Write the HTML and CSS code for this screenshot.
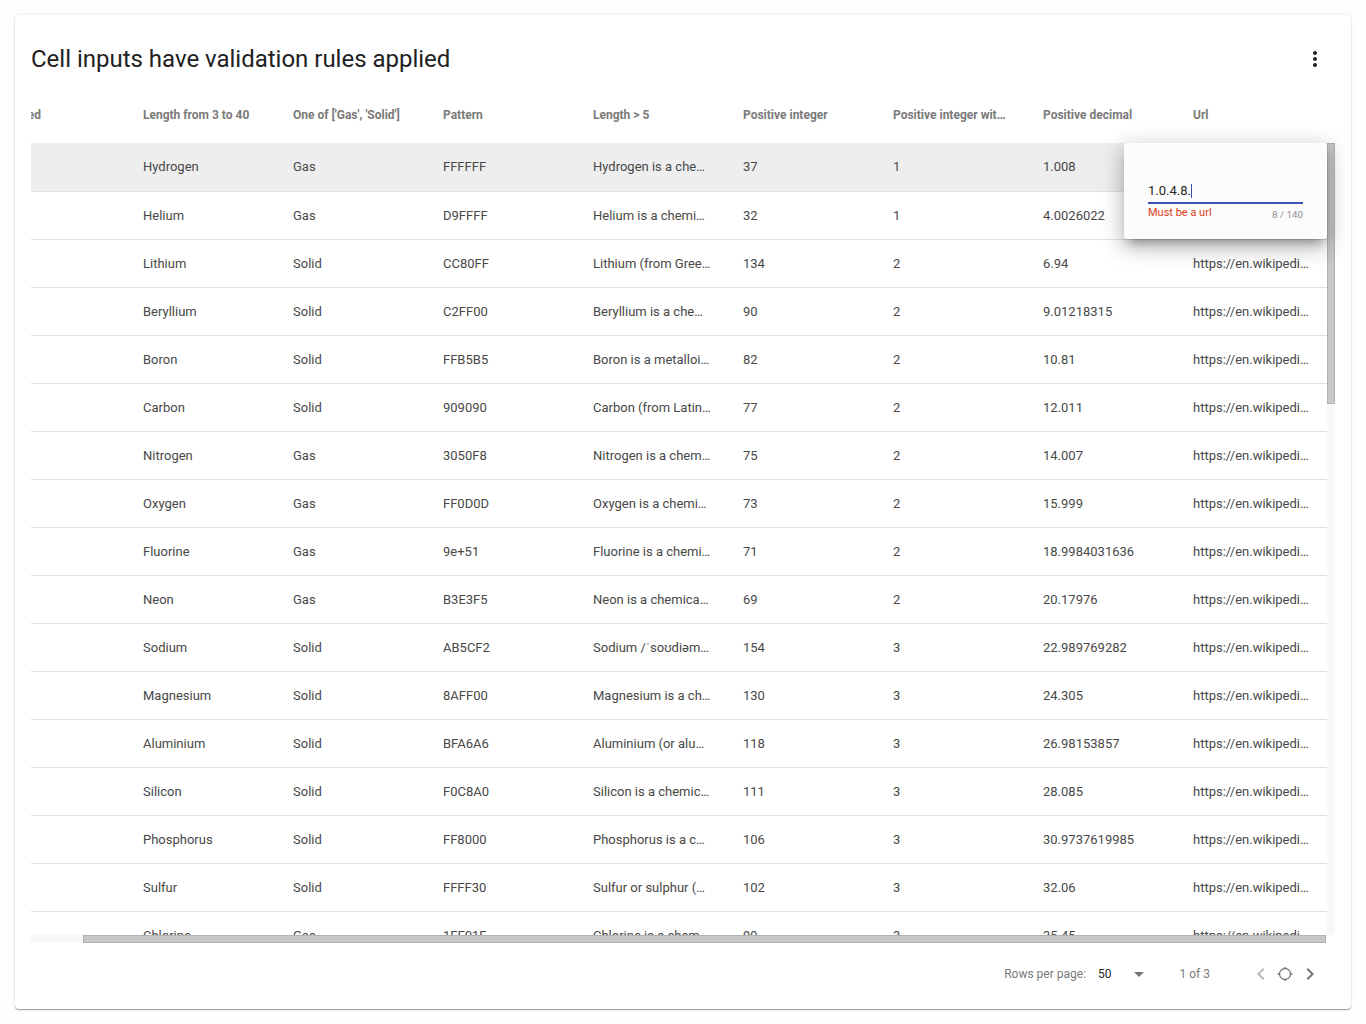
FILE: index.html
```html
<!DOCTYPE html>
<html lang="en">
<head>
<meta charset="utf-8">
<title>Cell inputs have validation rules applied</title>
<link rel="stylesheet" href="styles.css">
</head>
<body>
<main class="card">
  <header class="card-header">
    <h1 class="title">Cell inputs have validation rules applied</h1>
    <svg class="menu" width="24" height="24" viewBox="0 0 24 24"><path d="M12 8c1.1 0 2-.9 2-2s-.9-2-2-2-2 .9-2 2 .9 2 2 2zm0 2c-1.1 0-2 .9-2 2s.9 2 2 2 2-.9 2-2-.9-2-2-2zm0 6c-1.1 0-2 .9-2 2s.9 2 2 2 2-.9 2-2-.9-2-2-2z"/></svg>
  </header>
  <div class="head row">
    <span class="clipped"><span>ed</span></span><span>Length from 3 to 40</span><span>One of ['Gas', 'Solid']</span><span>Pattern</span><span>Length &gt; 5</span><span>Positive integer</span><span>Positive integer wit…</span><span>Positive decimal</span><span>Url</span>
  </div>
  <section class="viewport">
    <div class="rows">
      <div class="row active"><span></span><span>Hydrogen</span><span>Gas</span><span>FFFFFF</span><span>Hydrogen is a che…</span><span>37</span><span>1</span><span>1.008</span><span></span></div>
      <div class="row"><span></span><span>Helium</span><span>Gas</span><span>D9FFFF</span><span>Helium is a chemi…</span><span>32</span><span>1</span><span>4.0026022</span><span></span></div>
      <div class="row"><span></span><span>Lithium</span><span>Solid</span><span>CC80FF</span><span>Lithium (from Gree…</span><span>134</span><span>2</span><span>6.94</span><span>https://en.wikipedi…</span></div>
      <div class="row"><span></span><span>Beryllium</span><span>Solid</span><span>C2FF00</span><span>Beryllium is a che…</span><span>90</span><span>2</span><span>9.01218315</span><span>https://en.wikipedi…</span></div>
      <div class="row"><span></span><span>Boron</span><span>Solid</span><span>FFB5B5</span><span>Boron is a metalloi…</span><span>82</span><span>2</span><span>10.81</span><span>https://en.wikipedi…</span></div>
      <div class="row"><span></span><span>Carbon</span><span>Solid</span><span>909090</span><span>Carbon (from Latin…</span><span>77</span><span>2</span><span>12.011</span><span>https://en.wikipedi…</span></div>
      <div class="row"><span></span><span>Nitrogen</span><span>Gas</span><span>3050F8</span><span>Nitrogen is a chem…</span><span>75</span><span>2</span><span>14.007</span><span>https://en.wikipedi…</span></div>
      <div class="row"><span></span><span>Oxygen</span><span>Gas</span><span>FF0D0D</span><span>Oxygen is a chemi…</span><span>73</span><span>2</span><span>15.999</span><span>https://en.wikipedi…</span></div>
      <div class="row"><span></span><span>Fluorine</span><span>Gas</span><span>9e+51</span><span>Fluorine is a chemi…</span><span>71</span><span>2</span><span>18.9984031636</span><span>https://en.wikipedi…</span></div>
      <div class="row"><span></span><span>Neon</span><span>Gas</span><span>B3E3F5</span><span>Neon is a chemica…</span><span>69</span><span>2</span><span>20.17976</span><span>https://en.wikipedi…</span></div>
      <div class="row"><span></span><span>Sodium</span><span>Solid</span><span>AB5CF2</span><span>Sodium /ˈsoʊdiəm…</span><span>154</span><span>3</span><span>22.989769282</span><span>https://en.wikipedi…</span></div>
      <div class="row"><span></span><span>Magnesium</span><span>Solid</span><span>8AFF00</span><span>Magnesium is a ch…</span><span>130</span><span>3</span><span>24.305</span><span>https://en.wikipedi…</span></div>
      <div class="row"><span></span><span>Aluminium</span><span>Solid</span><span>BFA6A6</span><span>Aluminium (or alu…</span><span>118</span><span>3</span><span>26.98153857</span><span>https://en.wikipedi…</span></div>
      <div class="row"><span></span><span>Silicon</span><span>Solid</span><span>F0C8A0</span><span>Silicon is a chemic…</span><span>111</span><span>3</span><span>28.085</span><span>https://en.wikipedi…</span></div>
      <div class="row"><span></span><span>Phosphorus</span><span>Solid</span><span>FF8000</span><span>Phosphorus is a c…</span><span>106</span><span>3</span><span>30.9737619985</span><span>https://en.wikipedi…</span></div>
      <div class="row"><span></span><span>Sulfur</span><span>Solid</span><span>FFFF30</span><span>Sulfur or sulphur (…</span><span>102</span><span>3</span><span>32.06</span><span>https://en.wikipedi…</span></div>
      <div class="row"><span></span><span>Chlorine</span><span>Gas</span><span>1FF01F</span><span>Chlorine is a chem…</span><span>99</span><span>3</span><span>35.45</span><span>https://en.wikipedi…</span></div>
    </div>
    <div class="track-y"><div class="thumb-y"></div></div>
    <div class="track-x"><div class="thumb-x"></div></div>
    <div class="editor">
      <div class="field"><span>1.0.4.8.</span><i class="caret"></i></div>
      <div class="notes"><span class="error">Must be a url</span><span class="count">8 / 140</span></div>
    </div>
  </section>
  <footer class="pager">
    <span class="label">Rows per page:</span>
    <span class="size">50</span>
    <svg class="drop" width="24" height="24" viewBox="0 0 24 24"><path d="M7 10l5 5 5-5z"/></svg>
    <span class="range">1 of 3</span>
    <svg class="prev" width="24" height="24" viewBox="0 0 24 24"><path d="M15.41 7.41L14 6l-6 6 6 6 1.41-1.41L10.83 12z"/></svg>
    <svg class="reset" width="24" height="24" viewBox="0 0 24 24"><circle cx="12" cy="12" r="5.5"/><path d="M12 5v2M12 17v2M4.500 12h2M17.500 12h2"/></svg>
    <svg class="next" width="24" height="24" viewBox="0 0 24 24"><path d="M10 6L8.590 7.410 13.170 12l-4.580 4.590L10 18l6-6z"/></svg>
  </footer>
</main>
</body>
</html>
```
FILE: styles.css
```css
* { box-sizing: border-box; }
body {
  margin: 0;
  padding: 15px;
  background: #fefefe;
  font-family: Roboto, "Liberation Sans", sans-serif;
  color: #212121;
}
.card {
  height: 994px;
  padding: 0 16px;
  background: #fff;
  border-radius: 4px;
  box-shadow: 0 1px 1px rgba(0, 0, 0, .36), 0 0 3px rgba(0, 0, 0, .12);
}
.card-header {
  display: flex;
  justify-content: space-between;
  align-items: center;
  height: 88px;
  padding-right: 8px;
}
.title { margin: 0; font-size: 24px; line-height: 32px; font-weight: 400; letter-spacing: -.01px; }
.menu { fill: #212121; }
.row {
  display: grid;
  grid-template-columns: 112px repeat(7, 150px) 134px;
  align-items: center;
  height: 48px;
  border-top: 1px solid #e0e0e0;
  font-size: 13px;
  color: #484848;
  white-space: nowrap;
}
.row.head {
  height: 40px;
  padding-bottom: 16px;
  border: 0;
  font-size: 12px;
  font-weight: 700;
  color: #7a7a7a;
}
.clipped { display: flex; justify-content: flex-end; width: 10px; overflow: hidden; }
.row.active { border-top: 0; padding-bottom: 1px; background: #eee; }
.viewport {
  position: relative;
  display: grid;
  grid-template-columns: 1296px 8px;
  grid-template-rows: 792px 8px;
}
.rows { overflow: hidden; }
.track-y, .track-x { background: #f8f8f8; }
.thumb-y { height: 261px; background: #c7c7c7; border: 1px solid #b2b2b2; }
.track-x { padding-left: 52px; }
.thumb-x { width: 1243px; height: 8px; background: #c7c7c7; border: 1px solid #b2b2b2; }
.editor {
  position: absolute;
  top: 0;
  left: 1093px;
  width: 203px;
  height: 96px;
  padding: 36px 24px 0;
  background: #fcfcfc;
  border-radius: 3px;
  box-shadow: 0 8px 10px -5px rgba(0, 0, 0, .35), 0 10px 24px 2px rgba(0, 0, 0, .12), 0 4px 20px 4px rgba(0, 0, 0, .12);
}
.field {
  display: flex;
  align-items: center;
  height: 25px;
  border-bottom: 2px solid #3f51b5;
  font-size: 13px;
  color: #262626;
}
.caret { width: 1px; height: 14px; background: #3f51b5; }
.notes { display: flex; justify-content: space-between; line-height: 17px; }
.error { font-size: 11px; color: #e03c14; }
.count { padding-top: 2px; font-size: 9.8px; color: #8f8f8f; }
.pager {
  display: flex;
  align-items: center;
  justify-content: flex-end;
  height: 62px;
  padding-right: 13px;
  font-size: 12px;
  color: #7a7a7a;
  fill: #757575;
}
.size { margin-left: 12px; color: #262626; }
.drop { margin: 0 29px 0 15px; }
.prev { margin-left: 39px; opacity: .5; }
.reset { margin-right: 1px; fill: none; stroke: #757575; stroke-width: 1.3; }
```
